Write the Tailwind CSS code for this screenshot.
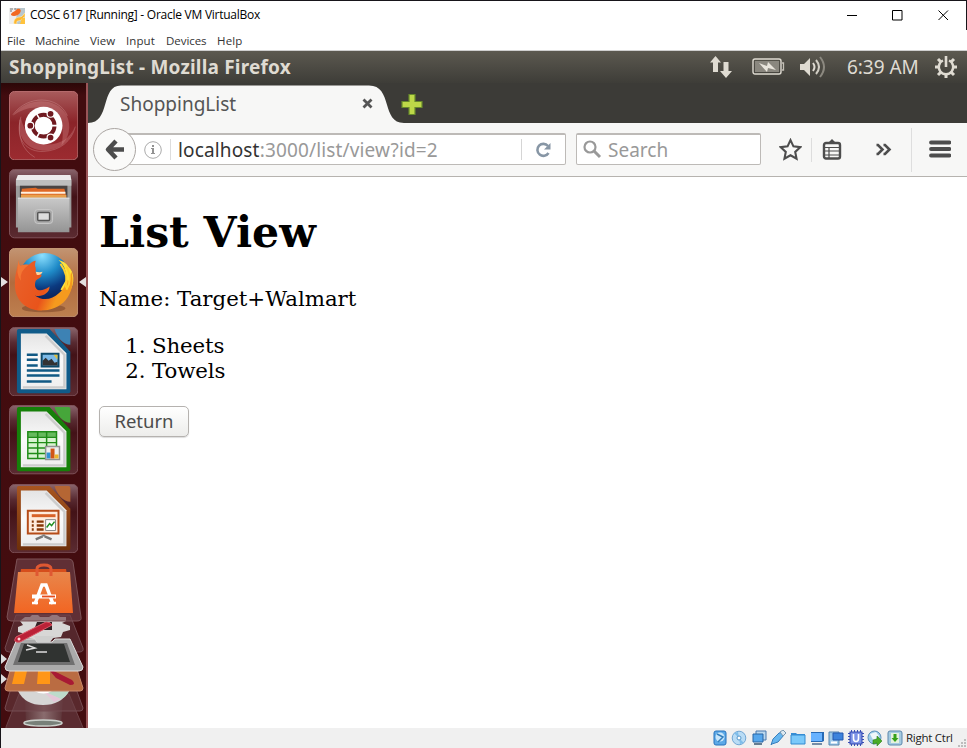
<!DOCTYPE html>
<html lang="en">
<head>
<meta charset="utf-8">
<title>COSC 617 [Running] - Oracle VM VirtualBox</title>
<script src="https://cdn.jsdelivr.net/npm/@tailwindcss/browser@4"></script>
</head>
<body class="w-[967px] h-[748px] overflow-hidden bg-white">
<div class="w-[967px] h-[748px] flex flex-col border-l border-[#17151a] font-['Open_Sans',sans-serif]">
  <!-- Host window title bar -->
  <header class="h-[30px] shrink-0 border-t border-r border-[#17151a] flex items-center pl-2 text-black">
    <svg class="size-4 shrink-0" viewBox="0 0 16 16"><path fill="#b9c7ce" d="M0 0h16v16H0z"/><path fill="#eee" d="M0 0h6l2 7-3 9H0z"/><path d="M1 1h3M5 1h2M1 3h2" stroke="#777"/><path d="M5 16c-1-5 3-7 6-7s4-4 5-4v4c-3 0-3 4-7 4-2 0-1 2-1 3z" fill="#ffb52f" stroke="#fff3ba" stroke-width=".6"/><path fill="#f26a22" d="M8 1c3-1 5 1 3 4S4 9 2 7c0-3 4-3 6-6z"/><path fill="#ffc33d" d="M13 10h3v6h-5z"/></svg>
    <h1 class="ml-[5px] w-[240px] whitespace-nowrap text-[12px] leading-[26px] -mt-px tracking-[-0.255px]">COSC 617 [Running] - Oracle VM VirtualBox</h1>
    <div class="ml-auto mr-[17px] flex gap-[35px] items-center">
      <svg class="w-[11px] h-[11px]" viewBox="0 0 11 11"><path d="M1 5.500h10" stroke="#000"/></svg>
      <svg class="w-[11px] h-[11px]" viewBox="0 0 11 11"><path d="M.5.5h9.500v9.500H.5z" fill="none" stroke="#000"/></svg>
      <svg class="w-[11px] h-[11px]" viewBox="0 0 11 11"><path d="m.5.5 9.500 9.500M10 .5.5 10" stroke="#000" fill="none"/></svg>
    </div>
  </header>
  <nav class="h-[21px] shrink-0 border-b border-[#cfcfcf] flex items-center pl-[6px] pt-px text-[11.5px] text-[#333] whitespace-nowrap">
    <span class="w-[28px]">File</span><span class="w-[55px] tracking-[-0.15px]">Machine</span><span class="w-[36px]">View</span><span class="w-[40px] tracking-[0.1px]">Input</span><span class="w-[51px] tracking-[-0.05px]">Devices</span><span class="tracking-[0.150px]">Help</span>
  </nav>

  <!-- Guest desktop -->
  <main class="h-[677px] shrink-0 flex flex-col">
    <div class="h-[32px] shrink-0 bg-linear-to-b from-[#5c5950] to-[#3e3d38] flex items-center text-[#dfdbd2] pl-2 font-['Noto_Sans',sans-serif]">
      <span class="font-bold text-[19px] leading-[30px] tracking-[0.180px] whitespace-nowrap">ShoppingList - Mozilla Firefox</span>
      <div class="ml-auto flex items-center h-full pr-[9px]">
        <svg class="w-[24px] h-[24px]" viewBox="0 0 24 24" fill="#dfdbd2"><path d="M6.500 1 12 7.500H9V17H4V7.500H1zM14.500 7h5v9h3.500l-6 7-6-7h3.500z"/></svg>
        <svg class="ml-[19px] w-[34px] h-[20px]" viewBox="0 0 34 20"><rect x="1" y="2" width="28" height="15" rx="2" fill="none" stroke="#dfdbd2" stroke-width="1.400"/><path d="M3 4h24v11H3z" fill="#8a877f"/><path d="M30 6h1.500v7H30" fill="none" stroke="#c4c0b7" stroke-width="1.300"/><path d="m7 6 8 3 1-4 8 8-8-2-1 4z" fill="#e8e4dc"/></svg>
        <svg class="ml-[13px] w-[28px] h-[24px]" viewBox="0 0 28 24" fill="none" stroke="#dfdbd2" stroke-width="2"><path d="M1 9h4l6-6v18l-6-6H1z" fill="#dfdbd2" stroke="none"/><path d="M14 8q3 4 0 8"/><path d="M17 5q6 7 0 14" opacity=".9"/><path d="M21 2q8 10 0 20" stroke="#8c8980"/></svg>
        <span class="ml-[20px] w-[74px] text-[19px] leading-[28px] tracking-[-0.05px] whitespace-nowrap">6:39 AM</span>
        <svg class="ml-[13px] w-[24px] h-[24px]" viewBox="0 0 24 24" fill="none" stroke="#dfdbd2"><path d="M9 5.500a7.200 7.200 0 1 0 6 0" stroke-width="2.400"/><path d="M12 1v11" stroke-width="2.600"/><path d="m4 4 3 3M20 4l-3 3M1 12h4M19 12h4M4 20l3-3M20 20l-3-3M12 19v4" stroke-width="3"/></svg>
      </div>
    </div>
    <div class="h-[645px] flex">
      <!-- Launcher -->
      <aside class="w-[87px] shrink-0 h-full bg-[#420c0f] bg-linear-to-b from-[#2c0708] via-[#420c0f] via-2% to-[#430c0f] border-r-2 border-[#9a5558] relative pl-[8px] pt-[7.600px] flex flex-col gap-[9.400px]">
        <svg class="size-[69.300px] shrink-0" viewBox="0 0 70 70"><defs><linearGradient id="dash" x2="0" y2="1"><stop stop-color="#a85b5c"/><stop offset=".45" stop-color="#8b2429"/><stop offset="1" stop-color="#9c2b30"/></linearGradient><linearGradient id="glass" x2="0" y2="1"><stop stop-color="#8a656c"/><stop offset=".22" stop-color="#582a31"/><stop offset=".4" stop-color="#431217"/><stop offset="1" stop-color="#5b2b31"/></linearGradient></defs><rect x=".5" y=".5" width="69" height="69" rx="5" fill="url(#dash)" stroke="#b66c6e"/><path d="M4 25C16 6 48 5 58 24c6 12 2 24-5 31 3-14 2-28-14-36C27 14 14 18 4 25z" fill="#e09a9a" opacity=".3"/><path d="M12 27c-5 17 4 32 22 33 16 0 28-8 32-23-4 10-14 17-27 17-15-1-24-13-27-27z" fill="#e09a9a" opacity=".3"/><path d="M4 24C18 4 50 4 59 25M12 26c-7 25 8 36 23 35 17-1 28-10 32-25M11 29c-2 18 2 30 15 38" fill="none" stroke="#dca5a5" opacity=".35"/><circle cx="35" cy="35" r="19" fill="#fff"/><circle cx="35" cy="35" r="11" fill="none" stroke="#701a20" stroke-width="4"/><path d="m35 35 15.500 0M35 35l-8-13.500M35 35l-8 13.500" stroke="#fff" stroke-width="1.600"/><g fill="#701a20" stroke="#fff" stroke-width="1.200"><circle cx="21.500" cy="35" r="3.500"/><circle cx="42" cy="23" r="3.500"/><circle cx="42" cy="47" r="3.500"/></g><circle cx="35" cy="35" r="8.500" fill="#fff"/></svg>
        <svg class="size-[69.300px] shrink-0" viewBox="0 0 70 70"><defs><linearGradient id="cab" x2="0" y2="1"><stop stop-color="#c9c9c9"/><stop offset="1" stop-color="#949494"/></linearGradient></defs><rect x=".5" y=".5" width="69" height="69" rx="5" fill="url(#glass)" stroke="#80535a"/><path d="M9 6h53l1 6v47H7V12z" fill="#9c9c9c"/><path d="M9 6h53l1 5H7z" fill="#ececec"/><path d="M7 11h56v6H7z" fill="#bebebe"/><path d="M11 17h48v14H11z" fill="#4a4443"/><path d="m13 20 14-1 2 1h27l2 9H12z" fill="#df6826"/><path d="M12 23h45v2H12z" fill="#fff0df"/><path d="M12 26h46v4H12z" fill="#e8a04d"/><path d="M9 29h52v35H9z" fill="url(#cab)"/><path d="M9 29.500h52" stroke="#e0e0e0"/><rect x="26" y="41" width="18" height="14" rx="3" fill="#aaa" stroke="#c9c9c9"/><rect x="29" y="44" width="12" height="8" rx="1" fill="#ddd" stroke="#555" stroke-width="1.500"/></svg>
        <svg class="size-[69.300px] shrink-0" viewBox="0 0 70 70"><defs><linearGradient id="ff" x2="0" y2="1"><stop stop-color="#c29472"/><stop offset=".5" stop-color="#b26b3e"/><stop offset="1" stop-color="#bd8050"/></linearGradient><radialGradient id="globe" cx=".45" cy=".05" r=".8"><stop stop-color="#8ce0ff"/><stop offset=".45" stop-color="#1f8bc8"/><stop offset=".8" stop-color="#0b3a80"/><stop offset="1" stop-color="#0b2863"/></radialGradient><linearGradient id="fox" x1=".1" x2=".9" y2=".3"><stop stop-color="#e9602a"/><stop offset=".7" stop-color="#e9541b"/><stop offset="1" stop-color="#f59a1e"/></linearGradient></defs><rect x=".5" y=".5" width="69" height="69" rx="5" fill="url(#ff)" stroke="#c59877"/><ellipse cx="35" cy="61" rx="22" ry="4" fill="#633018" opacity=".4"/><circle cx="36" cy="31" r="26" fill="url(#globe)"/><path d="M50 12c7 6 8 12 7 21l-5 9c3 2 6 3 9 2 6-8 5-20-1-25-2-4-6-6-10-7z" fill="#ffe238"/><path d="M10 12q0 6 2 6 4-2 8-1 4-4 7-4c-1 4-1 6 0 7v5l6 2c0 3-4 4-6 6-3 8 3 14 14 6 0 7-8 11-15 9 8 6 18 4 24-2 5-4 7-8 8-15l2 3 3-10c5 17-5 38-28 39C17 64 5 52 6 35 6 25 9 19 10 12z" fill="url(#fox)"/><path d="M27 24q4 1 7 0-2 4-6 3" fill="#ffd6a0"/><path d="M10 12q0 6 2 6 4-2 8-1-10 7-8 16-6-8-2-21" fill="#fa853a" opacity=".6"/><path d="M52 16c6 8 8 15 5 24M58 19c5 8 4 17 0 23" stroke="#ffd12d" stroke-width="2" fill="none"/></svg>
        <svg class="size-[69.300px] shrink-0" viewBox="0 0 70 70"><defs><linearGradient id="page" x2="0" y2="1"><stop stop-color="#e4e4e4"/><stop offset=".5" stop-color="#fafafa"/><stop offset="1" stop-color="#eee"/></linearGradient></defs><rect x=".5" y=".5" width="69" height="69" rx="5" fill="url(#glass)" stroke="#80535a"/><path d="M10 2h31l21 23v40q0 2-2 2H10q-2 0-2-2V4q0-2 2-2z" fill="#105b89"/><path d="M46 2h14q2 0 2 2v14c-7 0-14-8-16-16z" fill="#3d82b4"/><path d="M12 6.500h26l20 20V63H12z" fill="url(#page)"/><path d="M14 61h42V28L37 9" fill="none" stroke="#ccc" stroke-width="2.500"/><path d="M18 28h11M18 33h11M18 39h11M18 44h33M18 49h33M18 55h25" stroke="#115984" stroke-width="2.500"/><path d="M33 27h17v13H33z" fill="#7bb9e6" stroke="#0c4969" stroke-width="2"/><path d="m34 39 0-5 3-3 3 3 3-2 3 4 3-1v4z" fill="#333"/><path d="M45 28h4v5z" fill="#ddc03c"/></svg>
        <svg class="size-[69.300px] shrink-0" viewBox="0 0 70 70"><rect x=".5" y=".5" width="69" height="69" rx="5" fill="url(#glass)" stroke="#80535a"/><path d="M10 2h31l21 23v40q0 2-2 2H10q-2 0-2-2V4q0-2 2-2z" fill="#168009"/><path d="M46 2h14q2 0 2 2v14c-7 0-14-8-16-16z" fill="#46a63a"/><path d="M12 6.500h26l20 20V63H12z" fill="url(#page)"/><path d="M14 61h42V28L37 9" fill="none" stroke="#ccc" stroke-width="2.500"/><path d="M19 27h29v27H19z" fill="#d8f3d1"/><path d="M19 27h29v5H19z" fill="#66ba5d"/><path d="M19 27h29v27H19zM29 27v27M38 27v27M19 32.500h29M19 38h29M19 43.500h29M19 49h29" stroke="#208c18" stroke-width="1.500" fill="none"/><path d="M37 42h14v13H37z" fill="#eee" stroke="#929292" stroke-width="1.500"/><path d="M38 48h4v6h-4z" fill="#3192d2"/><path d="M42 44h4v10h-4z" fill="#d05517"/><path d="M46 50h4v4h-4z" fill="#ecb52b"/></svg>
        <svg class="size-[69.300px] shrink-0" viewBox="0 0 70 70"><defs><linearGradient id="brown" x2="0" y2="1"><stop stop-color="#a8551f"/><stop offset="1" stop-color="#6d2f0a"/></linearGradient></defs><rect x=".5" y=".5" width="69" height="69" rx="5" fill="url(#glass)" stroke="#80535a"/><path d="M10 2h31l21 23v40q0 2-2 2H10q-2 0-2-2V4q0-2 2-2z" fill="url(#brown)"/><path d="M46 2h14q2 0 2 2v14c-7 0-14-8-16-16z" fill="#b56634"/><path d="M12 6.500h26l20 20V63H12z" fill="url(#page)"/><path d="M14 61h42V28L37 9" fill="none" stroke="#ccc" stroke-width="2.500"/><path d="M19 27h31v23H19z" fill="#ffebdc" stroke="#b64c18" stroke-width="2"/><path d="M23 32h24" stroke="#d86228" stroke-width="3"/><path d="M23 38h2m3 0h7M23 42h2m3 0h7M23 46h2m3 0h7" stroke="#873707" stroke-width="2.500"/><path d="M37 36h10v11H37z" fill="#fff" stroke="#888"/><path d="m38 44 3-4 2 2 3-4" stroke="#218e20" stroke-width="1.500" fill="none"/><path d="M35 51v2m-1 0-7 3m9-3 7 3" stroke="#777" stroke-width="2.500"/></svg>
        <!-- Folded launcher entries -->
        <svg class="absolute left-0 top-[473px] w-[84px] h-[172px]" viewBox="1 556 84 172"><defs><linearGradient id="bag" x2="0" y2="1"><stop stop-color="#e8864b"/><stop offset="1" stop-color="#f26522"/></linearGradient><linearGradient id="trash"><stop stop-color="#5d3438"/><stop offset=".5" stop-color="#8a6c6e"/><stop offset="1" stop-color="#5d3438"/></linearGradient></defs>
          <path d="m19 694-13 33v3h78l-15-36z" fill="#5a2b30" stroke="#6d4348"/><path d="M25 697h38l-2 28H26z" fill="url(#trash)"/><ellipse cx="43" cy="723" rx="19" ry="3" fill="#788079" stroke="#cbd1cc" stroke-width="1.500"/>
          <path d="m15 675-10 33q0 3 3 3h72q3 0 3-3l-12-33z" fill="#6b4045" fill-opacity=".55" stroke="#754c52"/><path d="M18 691q7 14 25 14t26-14z" fill="#d6d6d5"/><path d="m43 691 18 8q6-3 8-8z" fill="#bddbcb"/><path d="m43 691 11 11 7-3z" fill="#e5c6d8"/><path d="M34 691h18q-8 5-18 0" fill="#fff"/>
          <path d="m15 654-10 34q0 3 3 3h72q3 0 3-3l-11-34z" fill="#ba6c42" stroke="#c7886a"/><path d="m15 671-3 13h12l3-13zM38 671l-1 13h13v-13z" fill="#ff9616"/><path d="m51 670 7 3 14 7q5 5-2 5l-14-7-6-7" fill="#a81a34"/>
          <path d="m16 615-11 33q0 4 4 4h70q5 0 4-4l-13-33z" fill="#55272c" stroke="#714950"/>
          <path d="M25 617h5l2-2h6l2 2h9l3-2h5l3 2h6v4l-4 2 8 3v4l-7 2-2 5-8 1-4 5H36l-2-4-10-1-2-5-4-1v-5l5-2-3-4z" fill="#d8d7d6"/><path d="M37 622h15v8H34z" fill="#352125"/>
          <path d="m17 639-12 28q0 4 4 4h70q4 0 4-4l-13-28h-15l-3 3H37l-2-3z" fill="#ababab" stroke="#ddd"/><path d="m21 643-8 22h62l-8-22z" fill="#707070"/><path d="m24 644-6 18h52l-6-18z" fill="#303331"/><path d="m27 645 8 3-9 2M36 652h11" fill="none" stroke="#ddd" stroke-width="1.500"/>
          <path d="M34 636h20l-4 6H37z" fill="#cfcfce"/><path d="m16 637 30-15q5 0 6 3L20 642q-8 1-4-5z" fill="#bb2137" stroke="#dc5968"/><circle cx="19" cy="639" r="1.500" fill="#ffd7d7"/>
          <path d="m17 559-10 58q0 4 4 4h66q5 0 4-4l-8-55q-1-3-4-3z" fill="#70424a" fill-opacity=".65" stroke="#7c5257"/><path d="M21 569h45l1 6H20z" fill="#d64e1c"/><path d="M18 572h52l3 41H14z" fill="url(#bag)"/><path d="M37 576v-7q0-4 7-4t7 4v7" fill="none" stroke="#df5832" stroke-width="3"/><path d="m35 604 7-19h4l7 19" fill="none" stroke="#fff" stroke-width="3.500"/><path d="M32 596.500h24" stroke="#fff" stroke-width="4"/><path d="M42 596.500h13" stroke="#e84e1c" stroke-width="1.800"/><path d="M32 603h6M49 603h7" stroke="#fff" stroke-width="2.500"/>
          <path d="m1 654 6 5-6 5zM1 674l6 5-6 5z" fill="#ddd"/>
        </svg>
        <svg class="absolute left-0 top-[193px] w-[85px] h-[12px]" viewBox="0 0 85 12"><path d="M0 1l7 5-7 5zM85 1l-7 5 7 5z" fill="#e3dfdf"/></svg>
      </aside>

      <!-- Firefox -->
      <section class="flex-1 h-full flex flex-col bg-white">
        <div class="h-[40px] shrink-0 relative bg-[#3c3b37]">
          <svg class="absolute left-0 top-0 w-[350px] h-[40px]" viewBox="0 0 350 40"><path d="M0 40C23 40 12 2.500 33 2.500H281C305 2.500 293 40 316 40z" fill="#f7f7f6"/><path d="M321 11.500h6v7h7v6h-7v7h-6v-7h-7v-6h7z" fill="#bdd848" stroke="#67892c" stroke-width="1.200"/><path d="m275.500 16.500 8 8M283.500 16.500l-8 8" stroke="#555" stroke-width="2.800"/></svg>
          <span class="relative block pl-[32px] pt-[8px] text-[19px] leading-[26px] text-[#555] font-['Noto_Sans',sans-serif]">ShoppingList</span>
        </div>
        <div class="h-[54px] shrink-0 bg-[#f7f7f6] border-b border-[#b6b3af] flex items-center relative font-['Noto_Sans',sans-serif]">
          <div class="ml-[28px] w-[450px] h-[32px] -mt-px border border-t-2 border-[#bdbab7] rounded-[2px] bg-white flex items-center pl-[27px]">
            <svg class="size-[18px] shrink-0" viewBox="0 0 18 18"><circle cx="9" cy="9" r="8.300" fill="none" stroke="#aaa"/><path d="M8 4h2v2H8zM7 7h3v5h1v1H7v-1h1V8H7z" fill="#929292"/></svg>
            <i class="ml-[8px] w-px h-[21px] bg-[#ddd]"></i>
            <span class="ml-[7px] mt-[2px] text-[19px] text-[#999] whitespace-nowrap tracking-[0.150px]"><b class="font-normal text-[#333]">localhost</b>:3000/list/view?id=2</span>
            <i class="ml-auto w-px h-[21px] bg-[#d5d5d5]"></i>
            <svg class="ml-[12px] mr-[13px] size-[18px]" viewBox="0 0 18 18"><path d="M14.500 12a6 6 0 1 1-.5-7" fill="none" stroke="#8796a5" stroke-width="2.600"/><path d="M16.500 2v6.500H10z" fill="#8796a5"/></svg>
          </div>
          <div class="ml-[10px] w-[185px] h-[32px] -mt-px border border-t-2 border-[#bdbab7] rounded-[2px] bg-white flex items-center pl-[6px]">
            <svg class="size-[19px]" viewBox="0 0 19 19" fill="none" stroke="#999"><circle cx="7" cy="7" r="5.500" stroke-width="2.200"/><path d="m11 11 6 6" stroke-width="3"/></svg>
            <span class="ml-[6px] mt-[2px] text-[19px] text-[#999]">Search</span>
          </div>
          <svg class="ml-[18px] size-[23px]" viewBox="0 0 22 22"><path d="m11 2 2.800 6 6.500.8-4.800 4.500 1.300 6.500L11 16.500l-5.800 3.300 1.300-6.500L1.700 8.800l6.500-.8z" fill="none" stroke="#4d4d4d" stroke-width="2"/></svg>
          <i class="ml-[9px] w-px h-[24px] bg-[#ddd]"></i>
          <svg class="ml-[10px] w-[20px] h-[22px]" viewBox="0 0 20 22"><path d="M6 4 10 0l4 4z" fill="#4d4d4d"/><rect x="2" y="4" width="16" height="15.500" rx="2" fill="none" stroke="#4d4d4d" stroke-width="2.400"/><path d="M2 8.500h15M3 12h14M3 16h14M7 8v11" stroke="#4d4d4d" stroke-width="1.200"/></svg>
          <svg class="ml-[33px] w-[18px] h-[14px]" viewBox="0 0 18 14" fill="none" stroke="#4d4d4d" stroke-width="2.600"><path d="M1.500 2H3l4.500 4.500L3 11H1.500M8.500 2H10l4.500 4.500L10 11H8.500"/></svg>
          <i class="ml-[18px] w-px h-[44px] bg-[#dedede]"></i>
          <svg class="ml-[17px] w-[22px] h-[20px]" viewBox="0 0 22 20"><path d="M2 2.500h18.500M2 9h18.500M2 15.500h18.500" stroke="#4d4d4d" stroke-width="3.800" stroke-linecap="round"/></svg>
          <span class="absolute left-[5px] top-[5px] size-[43px] rounded-full border border-[#aaa5a2] bg-[#fafaf9] flex items-center justify-center"><svg class="w-[21px] h-[22px]" viewBox="0 0 21 22"><path d="m12 2-8 8.500 8 8.500M4 10.500h16" fill="none" stroke="#4d4d4d" stroke-width="4.500" stroke-linejoin="round"/></svg></span>
        </div>
        <article class="flex-1 pl-[11px] text-black font-['DejaVu_Serif',serif] text-[21.300px] leading-[25.500px]">
          <h2 class="pt-[30px] text-[42.600px] leading-[51px] font-bold whitespace-nowrap">List View</h2>
          <p class="mt-[28px] whitespace-nowrap">Name: Target+Walmart</p>
          <ol class="mt-[21px] pl-[53px] list-decimal tracking-[-0.100px]"><li>Sheets</li><li>Towels</li></ol>
          <button class="mt-[22px] block w-[90px] h-[31px] rounded-[5px] border border-[#b5b2af] bg-linear-to-b from-white to-[#ededeb] font-['Noto_Sans',sans-serif] text-[18.500px] leading-[28px] text-[#4c4c4c] shadow-[0_1px_1px_#ddd]">Return</button>
        </article>
      </section>
    </div>
  </main>

  <!-- Virtual machine status bar -->
  <footer class="h-[20px] shrink-0 bg-[#f0f0f0] flex items-center pl-[711px] gap-[3.400px]">
    <svg class="size-4 shrink-0" viewBox="0 0 16 16"><rect x="2" y="1" width="12" height="14" rx="2" fill="#5ca9e7" stroke="#2673bd"/><circle cx="8" cy="7" r="4.500" fill="#c8e6fb"/><path d="m5 4 6 3-5 5" stroke="#347fbd" fill="none" stroke-width="1.500"/></svg>
    <svg class="size-4 shrink-0" viewBox="0 0 16 16"><circle cx="8" cy="8" r="6.800" fill="#b9dcf5" stroke="#71a7d5"/><path d="M8 8 3 3l4-1zM8 8l5 5-4 1z" fill="#7fbdea"/><circle cx="8" cy="8" r="2" fill="#fff" stroke="#5596ca"/></svg>
    <svg class="size-4 shrink-0" viewBox="0 0 16 16"><path d="M5 1h10v9H5z" fill="#bad7ed" stroke="#4879ae"/><path d="M2 4h10v8H2z" fill="#55a6ec" stroke="#2865a3"/><path d="M3 14h8" stroke="#657c91" stroke-width="2"/></svg>
    <svg class="size-4 shrink-0" viewBox="0 0 16 16"><path d="m1 15 2-6 6-6q3-2 5 2l-6 7-6 2z" fill="#65b6ef" stroke="#397fbc"/><path d="m10 2 3-2 3 3-3 3z" fill="#dce8f0" stroke="#7596af"/></svg>
    <svg class="size-4 shrink-0" viewBox="0 0 16 16"><path d="M1 3h5l1 1h8v9H1z" fill="#368ed5"/><path d="M1 5h14v9H1z" fill="#7bc9fa" stroke="#348bd0"/></svg>
    <svg class="size-4 shrink-0" viewBox="0 0 16 16"><path d="M2 2h13v9l-2 1H2z" fill="#286ab5"/><path d="M2 3h11v8H2z" fill="#68b2ff"/><path d="M3 14h10" stroke="#758ca6" stroke-width="2"/></svg>
    <svg class="size-4 shrink-0" viewBox="0 0 16 16"><path d="M1 2h10v13H1z" fill="#9bc8e9" stroke="#5684ad"/><path d="M5 3h10v7H5z" fill="#3d83dc" stroke="#2459ae"/><path d="M3 12.500h6" stroke="#fff" stroke-width="2"/></svg>
    <svg class="size-4 shrink-0" viewBox="0 0 16 16"><path d="M3.500 0v3m3-3v3m3-3v3m3-3v3M3.500 13v3m3-3v3m3-3v3m3-3v3M0 3.500h3m-3 3h3m-3 3h3m-3 3h3m10-9h3m-3 3h3m-3 3h3m-3 3h3" stroke="#3c51b5"/><rect x="2" y="2" width="12" height="12" fill="#7d93e6" stroke="#3047ae"/><path d="M5.500 4v4.500q0 3 2.500 3t2.500-3V4" stroke="#fff" stroke-width="1.600" fill="none"/></svg>
    <svg class="size-4 shrink-0" viewBox="0 0 16 16"><circle cx="7.500" cy="7.500" r="6.500" fill="#9fcde8" stroke="#5b91bd"/><path d="m3 4 6-2 3 4-5 5-2-3z" fill="#eff7fa"/><path d="m6 10 4-1V6l5 5-5 5v-3l-4 1z" fill="#4aac28" stroke="#2d7f1a" stroke-width=".6"/></svg>
    <svg class="size-4 shrink-0" viewBox="0 0 16 16"><rect x="1" y="1" width="14" height="14" rx="2" fill="#a5cbe1" stroke="#5b87ad"/><path d="M4 3h8v10H4z" fill="#e5f1dd"/><path d="M6.500 4h3v4h2L8 12 4.500 8h2z" fill="#35a118"/></svg>
    <span class="text-[11.500px] tracking-[-0.250px] leading-[18px] whitespace-nowrap text-[#222]">Right Ctrl</span>
    <svg class="ml-auto self-end size-[9px]" viewBox="0 0 9 9" fill="#bdbdbd"><path d="M6 0h2v2H6zM3 3h2v2H3zM6 3h2v2H6zM0 6h2v2H0zM3 6h2v2H3zM6 6h2v2H6z"/></svg>
  </footer>
</div>
</body>
</html>
